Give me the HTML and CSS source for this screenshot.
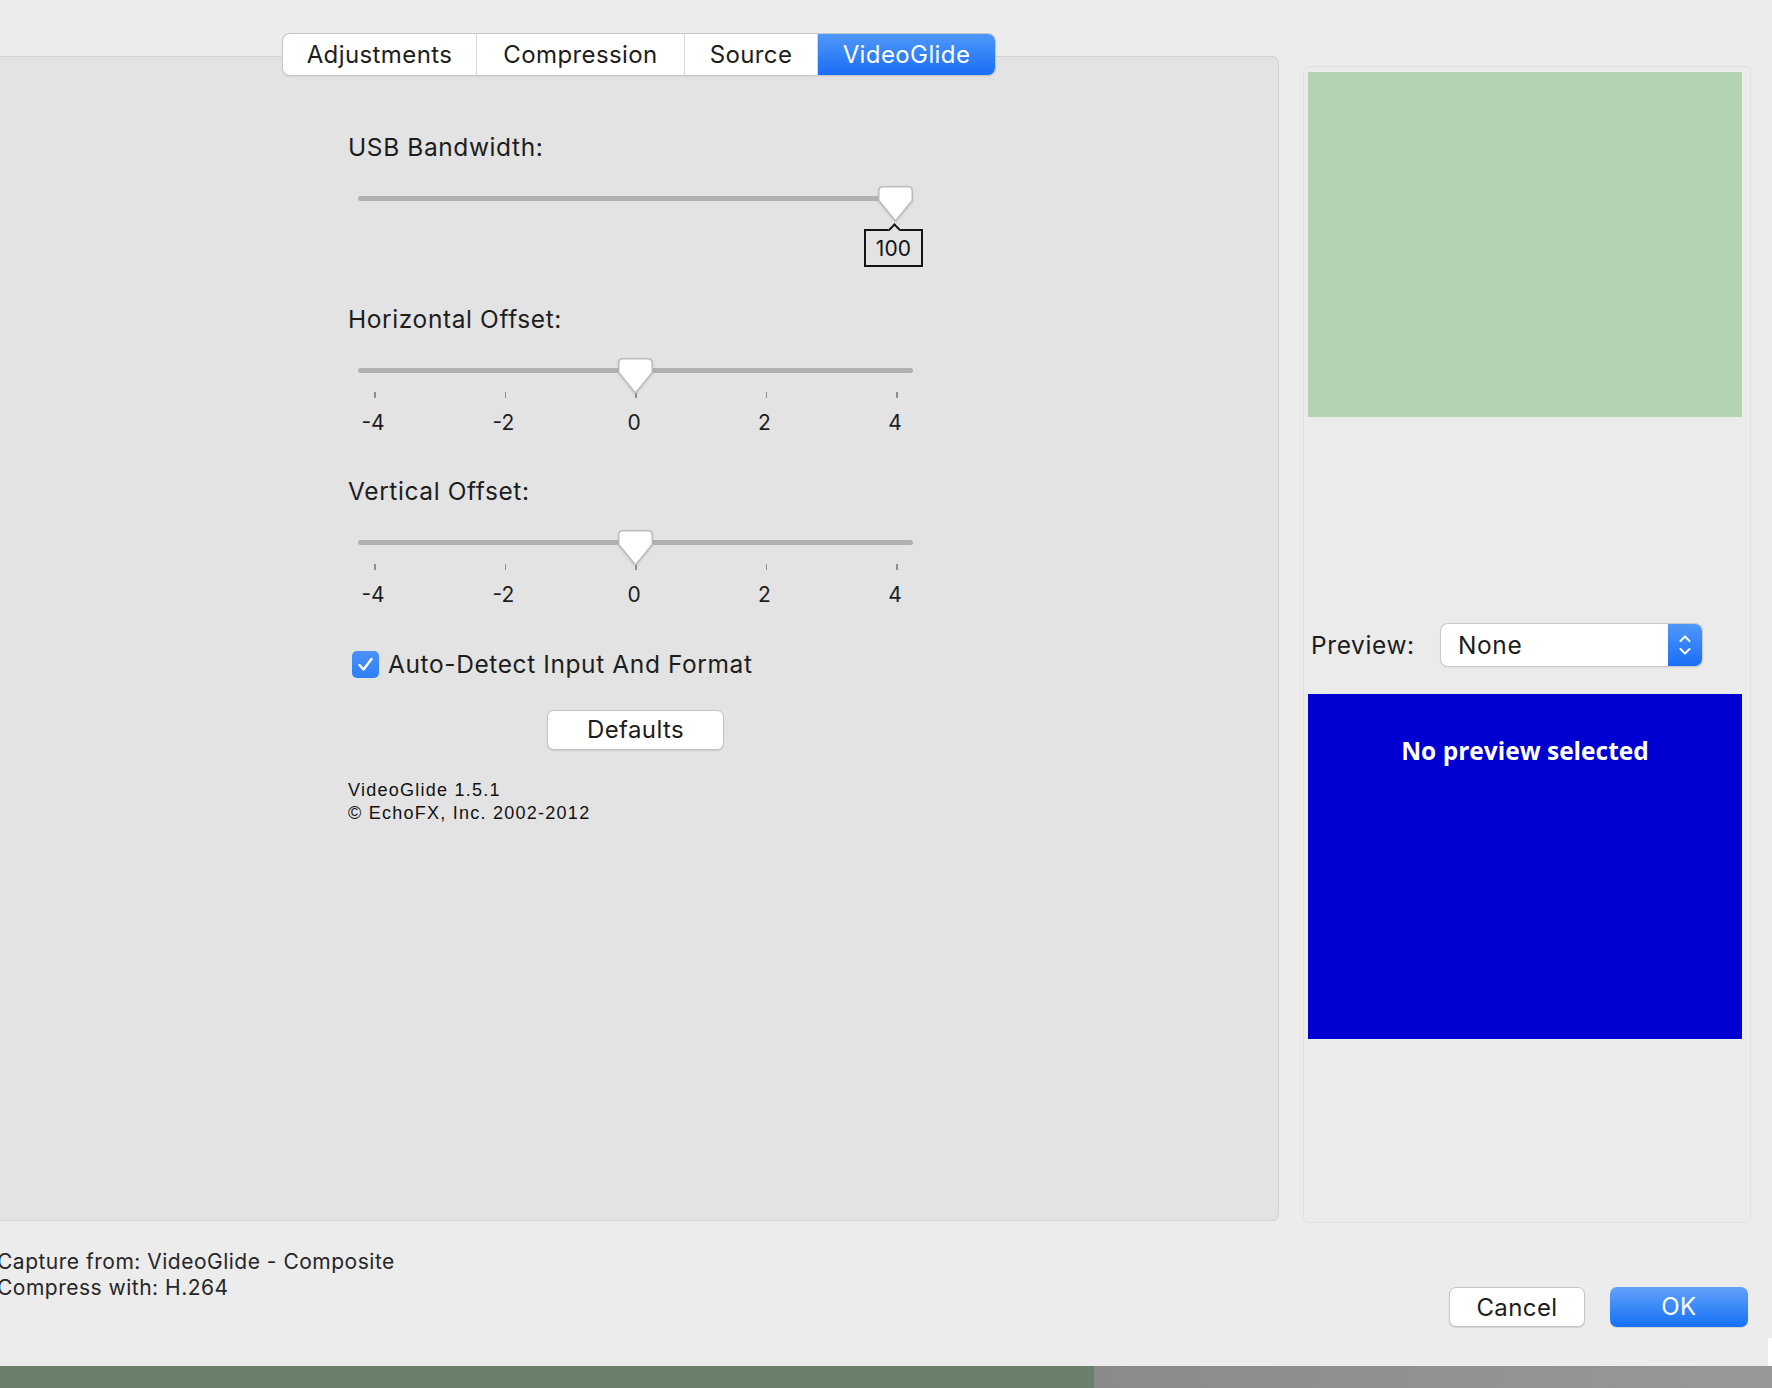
FILE: index.html
```html
<!DOCTYPE html>
<html>
<head>
<meta charset="utf-8">
<title>VideoGlide Settings</title>
<link rel="stylesheet" href="styles.css">
</head>
<body>
<div class="window">
  <div class="main">
    <div class="tabview">
      <div class="tabs">
        <div class="tab t1">Adjustments</div>
        <div class="tab t2">Compression</div>
        <div class="tab t3">Source</div>
        <div class="tab t4 active">VideoGlide</div>
      </div>
      <div class="pane">
        <div class="field-label">USB Bandwidth:</div>
        <div class="slider">
          <div class="track"></div>
          <svg class="thumb" style="left:520px" width="35" height="36" viewBox="0 0 35 36"><path d="M5 0.75 H30 Q34.25 0.75 34.25 5 V14.5 L17.5 35 L0.75 14.5 V5 Q0.75 0.75 5 0.75 Z" fill="#fff" stroke="#bcbcbc" stroke-width="1.5"/></svg>
          <div class="value-tip" style="left:506px">100</div>
        </div>

        <div class="field-label gap-label">Horizontal Offset:</div>
        <div class="slider">
          <div class="track"></div>
          <svg class="thumb" style="left:260px" width="35" height="36" viewBox="0 0 35 36"><path d="M5 0.75 H30 Q34.25 0.75 34.25 5 V14.5 L17.5 35 L0.75 14.5 V5 Q0.75 0.75 5 0.75 Z" fill="#fff" stroke="#bcbcbc" stroke-width="1.5"/></svg>
        </div>
        <div class="ticks">
          <div class="tick"><i></i><span>-4</span></div>
          <div class="tick"><i></i><span>-2</span></div>
          <div class="tick"><i></i><span>0</span></div>
          <div class="tick"><i></i><span>2</span></div>
          <div class="tick"><i></i><span>4</span></div>
        </div>

        <div class="field-label gap-label2">Vertical Offset:</div>
        <div class="slider">
          <div class="track"></div>
          <svg class="thumb" style="left:260px" width="35" height="36" viewBox="0 0 35 36"><path d="M5 0.75 H30 Q34.25 0.75 34.25 5 V14.5 L17.5 35 L0.75 14.5 V5 Q0.75 0.75 5 0.75 Z" fill="#fff" stroke="#bcbcbc" stroke-width="1.5"/></svg>
        </div>
        <div class="ticks">
          <div class="tick"><i></i><span>-4</span></div>
          <div class="tick"><i></i><span>-2</span></div>
          <div class="tick"><i></i><span>0</span></div>
          <div class="tick"><i></i><span>2</span></div>
          <div class="tick"><i></i><span>4</span></div>
        </div>

        <div class="check-row">
          <span class="checkbox"><svg width="27" height="27" viewBox="0 0 27 27"><path d="M7.5 14 L11.5 18.5 L19.5 8" fill="none" stroke="#fff" stroke-width="2.4" stroke-linecap="round" stroke-linejoin="round"/></svg></span>
          <span class="check-text">Auto-Detect Input And Format</span>
        </div>

        <div class="btn defaults">Defaults</div>

        <div class="version">VideoGlide 1.5.1<br>© EchoFX, Inc. 2002-2012</div>
      </div>
    </div>

    <div class="side">
      <div class="preview-green"></div>
      <div class="preview-row">
        <span class="preview-label">Preview:</span>
        <div class="select">
          <span class="select-value">None</span>
          <span class="select-arrows"><svg width="34" height="42" viewBox="0 0 34 42"><path d="M12.5 17 L17 12.5 L21.5 17" fill="none" stroke="#fff" stroke-width="2" stroke-linecap="round" stroke-linejoin="round"/><path d="M12.5 25 L17 29.5 L21.5 25" fill="none" stroke="#fff" stroke-width="2" stroke-linecap="round" stroke-linejoin="round"/></svg></span>
        </div>
      </div>
      <div class="preview-blue">No preview selected</div>
    </div>
  </div>

  <div class="footer">
    <div class="info">Capture from: VideoGlide - Composite<br>Compress with: H.264</div>
    <div class="btn cancel">Cancel</div>
    <div class="btn ok">OK</div>
    <div class="sliver"></div>
  </div>
</div>
<div class="desktop">
  <div class="desk-green"></div>
  <div class="desk-gray"></div>
</div>
</body>
</html>
```

FILE: styles.css
```css
html, body {
  margin: 0;
  padding: 0;
}
body {
  width: 1772px;
  height: 1388px;
  overflow: hidden;
  background: #ececec;
  font-family: Inter, "Noto Sans", "Liberation Sans", sans-serif;
  color: #1d1d1d;
  letter-spacing: 0.6px;
}
.window {
  height: 1366px;
  display: flex;
  flex-direction: column;
  background: #ececec;
}
.main {
  display: flex;
  align-items: flex-start;
  height: 1223px;
}

/* ---- Tab view ---- */
.tabview {
  width: 1279px;
  padding-top: 34px;
}
.tabs {
  position: relative;
  z-index: 1;
  display: flex;
  margin-left: 283px;
  width: 712px;
  height: 41px;
  background: #fff;
  border-radius: 7px;
  box-shadow: 0 0 0 1px #c6c6c6, 0 1px 2px rgba(0,0,0,0.18);
}
.tab {
  height: 41px;
  line-height: 41px;
  text-align: center;
  font-size: 24px;
  letter-spacing: 0.4px;
  color: #1d1d1d;
  border-right: 1px solid #d7d7d7;
  box-sizing: border-box;
}
.t1 { width: 194px; }
.t2 { width: 208px; }
.t3 { width: 133px; }
.t4 { width: 177px; border-right: none; }
.tab.active {
  color: #fff;
  background: linear-gradient(#4f97f8, #1a6ef5);
  border-radius: 0 7px 7px 0;
}
.pane {
  margin-top: -19px;
  height: 1165px;
  box-sizing: border-box;
  background: #e3e3e3;
  border: 1px solid #d4d4d4;
  border-left: none;
  border-radius: 0 7px 7px 0;
  padding: 75px 0 0 348px;
}
.field-label {
  font-size: 24.5px;
  line-height: 30px;
  height: 30px;
  color: #1d1d1d;
}
.gap-label { margin-top: 84px; }
.gap-label2 { margin-top: 40px; }

.slider {
  position: relative;
  width: 555px;
  height: 34px;
  margin: 24px 0 0 10px;
  padding-top: 10px;
  box-sizing: border-box;
}
.track {
  height: 5px;
  border-radius: 3px;
  background: #b1b1b1;
}
.thumb {
  position: absolute;
  top: 0;
  filter: drop-shadow(0 1px 1px rgba(0,0,0,0.12));
}
.value-tip {
  position: absolute;
  top: 43px;
  width: 55px;
  height: 34px;
  border: 2px solid #141414;
  background: #e3e3e3;
  font-size: 21px;
  line-height: 36px;
  letter-spacing: 0.2px;
  text-align: center;
  color: #111;
}
.value-tip::before {
  content: "";
  position: absolute;
  left: 24px;
  top: -6px;
  width: 7px;
  height: 7px;
  background: #e3e3e3;
  border-left: 2px solid #141414;
  border-top: 2px solid #141414;
  transform: rotate(45deg);
}

.ticks {
  display: flex;
  justify-content: space-between;
  width: 555px;
  margin-left: 10px;
  padding: 0 1px 0 2px;
  box-sizing: border-box;
}
.tick {
  width: 30px;
  display: flex;
  flex-direction: column;
  align-items: center;
}
.tick i {
  display: block;
  width: 1.5px;
  height: 6px;
  background: #8f8f8f;
}
.tick span {
  margin: 12px 4px 0 0;
  font-size: 21px;
  line-height: 26px;
  letter-spacing: 0;
  color: #1d1d1d;
}

.check-row {
  display: flex;
  align-items: center;
  height: 28px;
  margin: 42px 0 0 4px;
}
.checkbox {
  width: 27px;
  height: 27px;
  border-radius: 5px;
  background: linear-gradient(#4a92f8, #2f7ff5);
  display: flex;
}
.check-text {
  margin-left: 9px;
  font-size: 24.5px;
  color: #1d1d1d;
}

.btn {
  height: 40px;
  line-height: 40px;
  box-sizing: border-box;
  text-align: center;
  font-size: 24px;
  letter-spacing: 0.4px;
  border-radius: 7px;
  background: #fff;
  border: 1px solid #c4c4c4;
  box-shadow: 0 1px 1px rgba(0,0,0,0.12);
  color: #1d1d1d;
}
.defaults {
  width: 177px;
  margin: 32px 0 0 199px;
  line-height: 38px;
}
.version {
  margin-top: 29px;
  font-family: "Liberation Sans", Arial, sans-serif;
  font-size: 18px;
  line-height: 23px;
  letter-spacing: 1.25px;
  color: #111;
}

/* ---- Side panel ---- */
.side {
  margin: 66px 0 0 24px;
  width: 448px;
  height: 1157px;
  box-sizing: border-box;
  background: #ebebeb;
  border: 1px solid #e0e0e0;
  border-radius: 6px;
  padding: 5px 8px 0 4px;
}
.preview-green {
  height: 345px;
  background: #b3d3b3;
}
.preview-row {
  display: flex;
  align-items: center;
  margin-top: 207px;
  height: 42px;
}
.preview-label {
  margin-left: 3px;
  width: 130px;
  font-size: 24.5px;
  color: #1d1d1d;
}
.select {
  display: flex;
  width: 261px;
  height: 42px;
  box-sizing: border-box;
  background: #fff;
  border-radius: 7px;
  box-shadow: 0 0 0 1px #c8c8c8, 0 1px 2px rgba(0,0,0,0.15);
  overflow: hidden;
}
.select-value {
  flex: 1;
  padding-left: 17px;
  font-size: 24.5px;
  line-height: 42px;
}
.select-arrows {
  width: 34px;
  height: 42px;
  background: linear-gradient(#4f97f8, #1a6ef5);
  display: flex;
}
.preview-blue {
  margin-top: 28px;
  height: 345px;
  background: #0000d2;
  color: #fff;
  text-align: center;
  font-family: "Open Sans", "DejaVu Sans", sans-serif;
  font-weight: 700;
  font-size: 24.5px;
  letter-spacing: 0;
  padding-top: 39px;
  box-sizing: border-box;
  line-height: 36px;
}

/* ---- Footer ---- */
.footer {
  flex: 1;
  display: flex;
  align-items: flex-start;
}
.info {
  margin: 26px 0 0 -3px;
  font-size: 21px;
  line-height: 26px;
  letter-spacing: 0.5px;
  color: #262626;
}
.cancel {
  margin: 64px 0 0 auto;
  width: 136px;
}
.ok {
  margin: 64px 0 0 25px;
  width: 138px;
  color: #fff;
  border: none;
  background: linear-gradient(#62a2f9, #1570f6);
}
.sliver {
  width: 4px;
  height: 29px;
  margin: 115px 0 0 20px;
  background: #fff;
}

.desktop {
  height: 22px;
  display: flex;
  box-shadow: inset 0 2px 2px rgba(0,0,0,0.25);
}
.desk-green {
  width: 1094px;
  background: #6b806b;
}
.desk-gray {
  flex: 1;
  background: linear-gradient(90deg, #8a8a8a, #989898);
}
```
